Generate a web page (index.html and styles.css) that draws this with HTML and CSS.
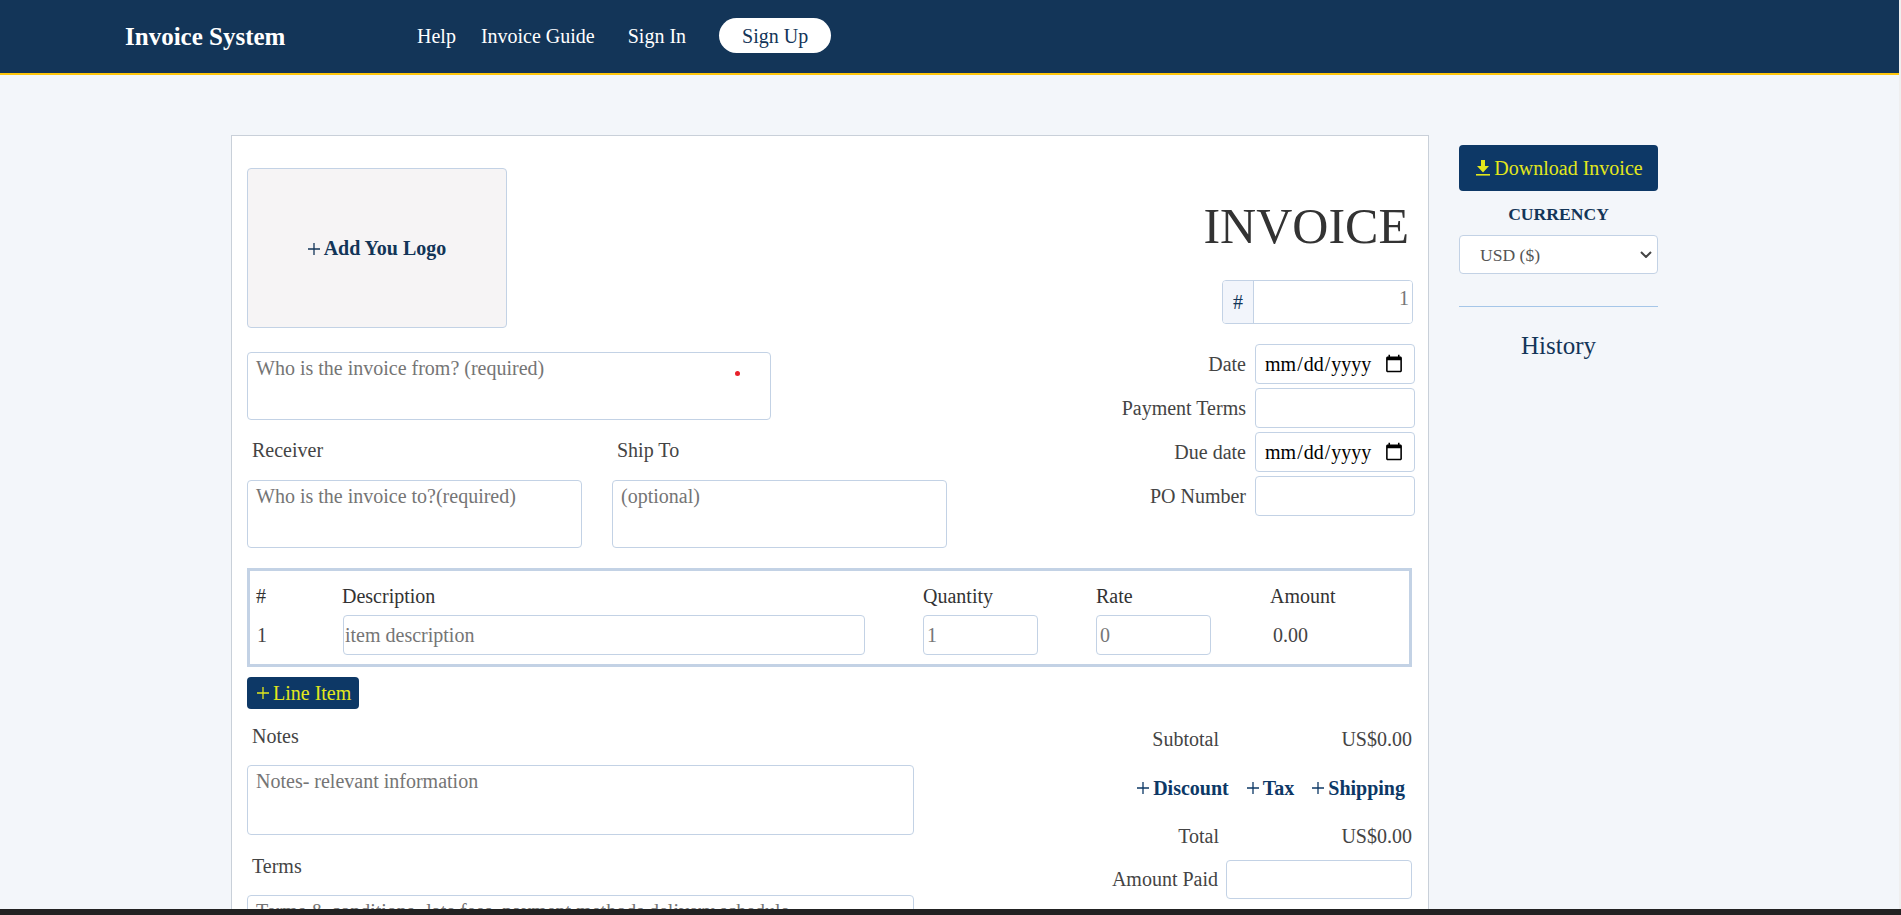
FILE: index.html
```html
<!DOCTYPE html>
<html lang="en">
<head>
    <meta charset="UTF-8">
    <meta name="viewport" content="width=device-width, initial-scale=1.0">
    <title>Invoice System</title>
    <link rel="stylesheet" href="styles.css">
</head>
<body>
    <div class="app">
        <nav class="navbar">
            <a class="brand">Invoice System</a>
            <div class="nav-links">
                <a>Help</a>
                <a>Invoice Guide</a>
                <a class="nav-signin">Sign In</a>
                <a class="nav-signup">Sign Up</a>
            </div>
        </nav>

        <main class="main">
            <section class="card">
                <div class="top">
                    <div class="top-left">
                        <div class="logo-box">
                            <svg class="plus" viewBox="0 0 12 12"><path d="M6 0v12M0 6h12"/></svg>
                            <span>Add You Logo</span>
                        </div>
                        <div class="from-wrap">
                            <textarea class="field from" placeholder="Who is the invoice from? (required)"></textarea>
                            <span class="red-dot"></span>
                        </div>
                        <div class="parties">
                            <div class="party">
                                <label class="label">Receiver</label>
                                <textarea class="field party-box" placeholder="Who is the invoice to?(required)"></textarea>
                            </div>
                            <div class="party">
                                <label class="label">Ship To</label>
                                <textarea class="field party-box" placeholder="(optional)"></textarea>
                            </div>
                        </div>
                    </div>

                    <div class="top-right">
                        <h1 class="title">INVOICE</h1>
                        <div class="number-group">
                            <span class="number-addon">#</span>
                            <input class="number-input" type="text" value="1">
                        </div>
                        <div class="meta-row">
                            <label>Date</label>
                            <input class="field meta-input" type="date">
                        </div>
                        <div class="meta-row">
                            <label>Payment Terms</label>
                            <input class="field meta-input" type="text">
                        </div>
                        <div class="meta-row">
                            <label>Due date</label>
                            <input class="field meta-input" type="date">
                        </div>
                        <div class="meta-row">
                            <label>PO Number</label>
                            <input class="field meta-input" type="text">
                        </div>
                    </div>
                </div>

                <div class="items">
                    <div class="items-head">#</div>
                    <div class="items-head">Description</div>
                    <div class="items-head">Quantity</div>
                    <div class="items-head">Rate</div>
                    <div class="items-head">Amount</div>
                    <div class="item-cell">1</div>
                    <div class="item-cell"><input class="field item-desc" type="text" placeholder="item description"></div>
                    <div class="item-cell"><input class="field item-num" type="text" value="1"></div>
                    <div class="item-cell"><input class="field item-num" type="text" value="0"></div>
                    <div class="item-cell item-amount">0.00</div>
                </div>

                <button class="line-btn">
                    <svg class="plus" viewBox="0 0 12 12"><path d="M6 0v12M0 6h12"/></svg>
                    <span>Line Item</span>
                </button>

                <div class="bottom">
                    <div class="bottom-left">
                        <label class="label notes-label">Notes</label>
                        <textarea class="field notes" placeholder="Notes- relevant information"></textarea>
                        <label class="label terms-label">Terms</label>
                        <textarea class="field notes" placeholder="Terms &amp; conditions- late fees, payment methods delivery schedule"></textarea>
                    </div>
                    <div class="bottom-right">
                        <div class="sum-row sum-first">
                            <span>Subtotal</span>
                            <span class="sum-value">US$0.00</span>
                        </div>
                        <div class="extras">
                            <a class="extra"><svg class="plus" viewBox="0 0 12 12"><path d="M6 0v12M0 6h12"/></svg>Discount</a>
                            <a class="extra"><svg class="plus" viewBox="0 0 12 12"><path d="M6 0v12M0 6h12"/></svg>Tax</a>
                            <a class="extra"><svg class="plus" viewBox="0 0 12 12"><path d="M6 0v12M0 6h12"/></svg>Shipping</a>
                        </div>
                        <div class="sum-row sum-total">
                            <span>Total</span>
                            <span class="sum-value">US$0.00</span>
                        </div>
                        <div class="paid-row">
                            <label>Amount Paid</label>
                            <input class="field paid-input" type="text">
                        </div>
                    </div>
                </div>
            </section>

            <aside class="sidebar">
                <button class="download-btn">
                    <svg class="download-icon" viewBox="0 0 14 16"><path d="M5 0h4v6h4l-6 6.5L1 6h4z"/><rect x="0" y="14" width="14" height="1.6"/></svg>
                    <span>Download Invoice</span>
                </button>
                <div class="currency-label">CURRENCY</div>
                <div class="currency-wrap">
                    <select class="field currency">
                        <option>USD ($)</option>
                    </select>
                    <svg class="chevron" viewBox="0 0 12 7"><path d="M1 1l5 5 5-5"/></svg>
                </div>
                <hr class="divider">
                <h2 class="history">History</h2>
            </aside>
        </main>
    </div>
    <div class="bottom-bar"></div>
</body>
</html>
```

FILE: styles.css
```css
html, body {
    height: 100%;
    overflow: hidden;
}
body {
    margin: 0;
    background-color: #efefef;
    font-family: "Liberation Serif", "Times New Roman", serif;
    font-size: 20px;
    color: #444;
}
.app {
    width: 1899px;
    min-height: 100vh;
    background-color: #f3f6fa;
}
.navbar {
    display: flex;
    align-items: center;
    height: 73px;
    padding-left: 125px;
    background-color: #133558;
    border-bottom: 2px solid #ffc60b;
}
.brand {
    width: 292px;
    font-size: 25px;
    font-weight: bold;
    color: #fff;
}
.nav-links {
    display: flex;
    align-items: center;
    gap: 25px;
    color: #fff;
}
.nav-signin {
    margin-left: 8px;
}
.nav-signup {
    box-sizing: border-box;
    display: flex;
    align-items: center;
    justify-content: center;
    width: 112px;
    height: 35px;
    margin-top: -2px;
    margin-left: 8px;
    padding-top: 2px;
    border-radius: 18px;
    background-color: #fff;
    color: #133558;
}
.main {
    display: flex;
    align-items: flex-start;
    padding-left: 231px;
}
.card {
    box-sizing: border-box;
    width: 1198px;
    margin-top: 60px;
    padding: 32px 16px 60px 15px;
    background-color: #fff;
    border: 1px solid #c9d0d9;
}
.top {
    display: flex;
    justify-content: space-between;
    margin-right: -3px;
}
.top-left {
    width: 700px;
}
.field {
    box-sizing: border-box;
    border: 1px solid #c3d2e5;
    border-radius: 4px;
    background-color: #fff;
    font-family: inherit;
    font-size: 20px;
    color: #555;
    outline: none;
}
textarea.field {
    display: block;
    padding: 4px 8px;
    resize: none;
}
.field::placeholder {
    color: #757575;
}
.plus {
    flex: none;
    width: 12px;
    height: 12px;
    fill: none;
    stroke: currentColor;
    stroke-width: 1.3;
}
.logo-box {
    box-sizing: border-box;
    display: flex;
    align-items: center;
    justify-content: center;
    gap: 4px;
    width: 260px;
    height: 160px;
    padding-top: 1px;
    border: 1px solid #c3d2e5;
    border-radius: 4px;
    background-color: #f6f4f5;
    font-weight: bold;
    color: #133558;
}
.from-wrap {
    position: relative;
    margin-top: 24px;
}
.from {
    width: 524px;
    height: 68px;
}
.red-dot {
    position: absolute;
    left: 488px;
    top: 19px;
    width: 5px;
    height: 5px;
    border-radius: 50%;
    background-color: #e8202a;
}
.parties {
    display: flex;
    gap: 30px;
    margin-top: 15px;
}
.party {
    width: 335px;
}
.label {
    display: block;
    padding-left: 5px;
    line-height: 30px;
}
.party-box {
    width: 100%;
    height: 68px;
    margin-top: 15px;
}
.top-right {
    display: flex;
    flex-direction: column;
    align-items: flex-end;
}
.title {
    margin: 33px 6px 0 0;
    font-size: 50px;
    font-kerning: none;
    font-weight: normal;
    line-height: 50px;
    color: #333;
}
.number-group {
    box-sizing: border-box;
    display: flex;
    width: 191px;
    height: 44px;
    margin: 29px 2px 0 0;
    border: 1px solid #c3d2e5;
    border-radius: 4px;
    overflow: hidden;
}
.number-addon {
    display: flex;
    align-items: center;
    justify-content: center;
    flex: none;
    width: 30px;
    background-color: #f2f5fb;
    border-right: 1px solid #c3d2e5;
    color: #133558;
}
.number-input {
    flex: 1;
    min-width: 0;
    padding: 0 3px 7px 0;
    border: none;
    outline: none;
    font-family: inherit;
    font-size: 20px;
    color: #777;
    text-align: right;
}
.meta-row {
    display: flex;
    align-items: center;
    gap: 9px;
    margin-top: 4px;
}
.number-group + .meta-row {
    margin-top: 20px;
}
.meta-input {
    width: 160px;
    height: 40px;
    padding: 0 8px;
    color: #000;
}
.items {
    box-sizing: border-box;
    display: grid;
    grid-template-columns: 86px 581px 173px 174px 1fr;
    grid-template-rows: 32px 40px;
    row-gap: 3px;
    height: 99px;
    margin-top: 20px;
    padding: 9px 0 9px 6px;
    border: 3px solid #c3d2e5;
}
.items-head {
    line-height: 32px;
    color: #333;
}
.item-cell {
    display: flex;
    align-items: center;
    padding-left: 1px;
}
.item-cell:nth-child(8), .item-cell:nth-child(9) {
    padding-left: 0;
}
.item-amount {
    padding-left: 3px;
}
.item-desc {
    width: 522px;
    height: 40px;
    padding: 0 1px;
}
.item-num {
    width: 115px;
    height: 40px;
    padding: 0 3px;
    color: #777;
}
.line-btn {
    display: flex;
    align-items: center;
    gap: 4px;
    width: 112px;
    height: 32px;
    margin-top: 10px;
    padding: 0 0 0 10px;
    border: none;
    border-radius: 4px;
    background-color: #0d3866;
    font-family: inherit;
    font-size: 20px;
    color: #e2e71c;
}
.bottom {
    display: flex;
    justify-content: space-between;
}
.bottom-left {
    width: 667px;
}
.notes-label {
    margin-top: 12px;
}
.terms-label {
    margin-top: 16px;
}
.notes {
    width: 100%;
    height: 70px;
    margin-top: 14px;
}
.bottom-right {
    display: flex;
    flex-direction: column;
    align-items: flex-end;
}
.sum-row {
    display: flex;
    line-height: 30px;
}
.sum-first {
    margin-top: 15px;
}
.sum-total {
    margin-top: 18px;
}
.sum-value {
    width: 193px;
    text-align: right;
}
.extras {
    display: flex;
    gap: 18px;
    margin: 19px 7px 0 0;
    font-weight: bold;
    line-height: 30px;
    color: #0d3866;
}
.extra {
    display: flex;
    align-items: center;
    gap: 4px;
}
.paid-row {
    display: flex;
    align-items: center;
    gap: 8px;
    margin-top: 9px;
}
.paid-input {
    width: 186px;
    height: 39px;
}
.sidebar {
    display: flex;
    flex-direction: column;
    width: 199px;
    margin: 70px 0 0 30px;
}
.download-btn {
    display: flex;
    align-items: center;
    justify-content: center;
    gap: 4px;
    height: 46px;
    padding: 0 0 0 2px;
    border: none;
    border-radius: 4px;
    background-color: #0d3866;
    font-family: inherit;
    font-size: 20px;
    color: #e2e71c;
}
.download-icon {
    width: 14px;
    height: 16px;
    fill: currentColor;
}
.currency-label {
    margin-top: 12px;
    font-size: 17.6px;
    font-weight: bold;
    line-height: 22px;
    text-align: center;
    color: #133558;
}
.currency-wrap {
    position: relative;
    margin-top: 10px;
}
.currency {
    display: block;
    width: 100%;
    height: 39px;
    padding-left: 20px;
    font-size: 17.6px;
    appearance: none;
}
.chevron {
    position: absolute;
    left: 181px;
    top: 16px;
    width: 12px;
    height: 7px;
    fill: none;
    stroke: #444;
    stroke-width: 2;
}
.divider {
    width: 100%;
    margin: 32px 0 0;
    border: none;
    border-top: 1px solid #a5c6e8;
}
.history {
    margin: 24px 0 0;
    font-size: 25px;
    font-weight: normal;
    line-height: 30px;
    text-align: center;
    color: #133558;
}
.bottom-bar {
    position: fixed;
    left: 0;
    right: 0;
    bottom: 0;
    height: 6px;
    background-color: #222;
}
```
